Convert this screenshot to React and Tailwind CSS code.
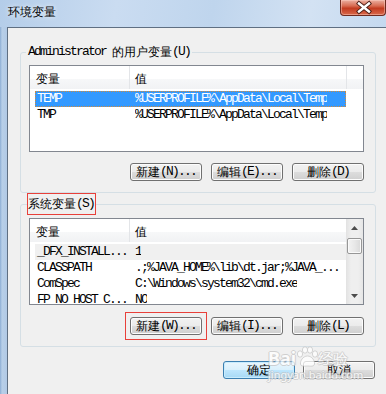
import React from "react";

const CJK = /[\u2E80-\u9FFF\u3000-\u303F\uFF00-\uFFEF]/;

const monoCls = "align-top font-mono text-[13px] tracking-[-1.8px]";
const cjkCls = "align-top font-sans text-[12px] tracking-normal";

function Txt({ s }) {
  const runs = [];
  for (const ch of s) {
    const c = CJK.test(ch);
    const last = runs[runs.length - 1];
    if (last && last.c === c) last.t += ch;
    else runs.push({ c, t: ch });
  }
  return runs.map((r, i) => (
    <span key={i} className={r.c ? cjkCls : monoCls}>
      {r.t}
    </span>
  ));
}

function Btn({ label, primary }) {
  return (
    <div
      className={
        primary
          ? "flex h-[18px] w-[72px] items-center justify-center rounded-[3px] border border-[#3c7fb1] bg-[linear-gradient(#eaf6fd,#d9f0fc_50%,#bee6fd_50%,#a7d9f5)] leading-[14px] shadow-[inset_0_0_0_1px_#c9ecfd]"
          : "flex h-[18px] w-[72px] items-center justify-center rounded-[3px] border border-[#707070] bg-[linear-gradient(#f2f2f2,#ebebeb_50%,#dddddd_50%,#cfcfcf)] leading-[14px] shadow-[inset_0_0_0_1px_#fcfcfc]"
      }
    >
      <div className="h-[14px] whitespace-nowrap leading-[14px]">
        <Txt s={label} />
      </div>
    </div>
  );
}

function Arrow({ down }) {
  return (
    <svg width="7" height="4" viewBox="0 0 7 4">
      {down ? (
        <path d="M0 0 H7 L3.5 4 Z" fill="#4d4d4d" />
      ) : (
        <path d="M0 4 H7 L3.5 0 Z" fill="#4d4d4d" />
      )}
    </svg>
  );
}

const userVars = [
  ["TEMP", "%USERPROFILE%\\AppData\\Local\\Temp"],
  ["TMP", "%USERPROFILE%\\AppData\\Local\\Temp"],
];

const sysVars = [
  ["_DFX_INSTALL...", "1"],
  ["CLASSPATH", ".;%JAVA_HOME%\\lib\\dt.jar;%JAVA_..."],
  ["ComSpec", "C:\\Windows\\system32\\cmd.exe"],
  ["FP_NO_HOST_C...", "NO"],
];

function Row({ name, value, state }) {
  let cls = "flex h-[16px] w-[311px] shrink-0 items-center border border-transparent leading-[14px]";
  if (state === "sel") cls = "flex h-[16px] w-[311px] shrink-0 items-center border border-dotted border-[#d08a3c] bg-[#3399ff] leading-[14px] text-white";
  if (state === "gray") cls = "flex h-[16px] w-[311px] shrink-0 items-center border border-transparent bg-[#f0f0f0] leading-[14px]";
  return (
    <div className={cls}>
      <div className="h-[14px] w-[99px] shrink-0 overflow-hidden whitespace-nowrap pl-[1px]">
        <Txt s={name} />
      </div>
      <div className="h-[14px] overflow-hidden whitespace-nowrap">
        <Txt s={value} />
      </div>
    </div>
  );
}

const headerBg = "bg-[linear-gradient(#ffffff,#ffffff_55%,#f7f8f9_55%,#f1f2f4)]";

export default function App() {
  return (
    <div className="relative flex h-[394px] w-[386px] flex-col overflow-hidden bg-[#f0f0f0] text-black">
      {/* title bar */}
      <div className="flex h-[27px] shrink-0 items-start bg-[linear-gradient(100deg,#b4cde9_0%,#cadcf1_30%,#bfd5ed_55%,#d3e2f3_80%,#c5d9ef_100%)]">
        <div className="pl-[8px] pt-[5px] font-sans text-[12px] leading-[14px] [text-shadow:0_0_5px_#ffffff]">
          环境变量
        </div>
        <div className="ml-auto h-[16px] w-[46px] rounded-b-[4px] border border-t-0 border-[#6e2a1f] bg-[linear-gradient(#ebb0a1,#d76a50_40%,#c23b20_55%,#d9694b)] shadow-[inset_0_0_0_1px_rgba(255,210,200,0.45)]">
          <svg width="44" height="15" viewBox="0 0 44 15">
            <path d="M18 3.5 L28 11.5 M28 3.5 L18 11.5" stroke="#4a1d15" strokeWidth="4.2" strokeLinecap="square" />
            <path d="M18 3.5 L28 11.5 M28 3.5 L18 11.5" stroke="#ffffff" strokeWidth="2.4" strokeLinecap="square" />
          </svg>
        </div>
      </div>

      <div className="flex flex-1">
        <div className="w-[7px] shrink-0 bg-[linear-gradient(90deg,#8cadd4,#b8cfe8_30%,#b1c9e5)]" />
        <div className="flex flex-1 flex-col border-l border-t border-[#5f6f82] pl-[12px] pt-[17px]">
          {/* user variables */}
          <fieldset className="w-[356px] rounded-[3px] border border-[#d5dfe5]">
            <legend className="ml-[5px] h-[14px] whitespace-nowrap px-[2px] leading-[14px]">
              <Txt s="Administrator 的用户变量(U)" />
            </legend>
            <div className="pb-[11px] pl-[8px] pr-[11px] pt-[6px]">
              <div className="flex h-[87px] w-[335px] flex-col overflow-hidden border border-[#828790] bg-white">
                <div className={"flex h-[23px] shrink-0 leading-[14px] " + headerBg}>
                  <div className="w-[100px] border-r border-[#e3e5e8] pl-[6px] pt-[6px]">
                    <Txt s="变量" />
                  </div>
                  <div className="w-[217px] border-r border-[#e3e5e8] pl-[5px] pt-[6px]">
                    <Txt s="值" />
                  </div>
                  <div className="flex-1" />
                </div>
                <div className="ml-[5px] mt-[2px] flex flex-col">
                  {userVars.map(([n, v], i) => (
                    <Row key={n} name={n} value={v} state={i === 0 ? "sel" : ""} />
                  ))}
                </div>
              </div>
              <div className="mt-[11px] flex justify-end gap-[9px]">
                <Btn label="新建(N)..." />
                <Btn label="编辑(E)..." />
                <Btn label="删除(D)" />
              </div>
            </div>
          </fieldset>

          {/* system variables */}
          <fieldset className="w-[356px] rounded-[3px] border border-[#d5dfe5]">
            <legend className="ml-[6px] h-[22px] whitespace-nowrap border border-[#e8403a] py-[3px] pr-[1px] leading-[14px]">
              <Txt s="系统变量(S)" />
            </legend>
            <div className="pb-[11px] pl-[8px] pr-[11px] pt-[3px]">
              <div className="flex h-[87px] w-[335px] overflow-hidden border border-[#828790] bg-white">
                <div className="flex flex-1 flex-col">
                  <div className={"flex h-[23px] shrink-0 leading-[14px] " + headerBg}>
                    <div className="w-[100px] border-r border-[#e3e5e8] pl-[6px] pt-[6px]">
                      <Txt s="变量" />
                    </div>
                    <div className="flex-1 pl-[5px] pt-[6px]">
                      <Txt s="值" />
                    </div>
                  </div>
                  <div className="ml-[5px] mt-[2px] flex flex-col">
                    {sysVars.map(([n, v], i) => (
                      <Row key={n} name={n} value={v} state={i === 0 ? "gray" : ""} />
                    ))}
                  </div>
                </div>
                <div className="flex w-[17px] shrink-0 flex-col items-center bg-[linear-gradient(90deg,#e2e2e2,#efefef_30%,#efefef_70%,#e6e6e6)]">
                  <div className="flex h-[17px] items-center justify-center">
                    <Arrow />
                  </div>
                  <div className="mt-[2px] h-[16px] w-[15px] rounded-[2px] border border-[#979797] bg-[linear-gradient(90deg,#f3f3f3,#e8e8e8_50%,#d9d9d9)] shadow-[inset_0_0_0_1px_#fafafa]" />
                  <div className="flex-1" />
                  <div className="flex h-[17px] items-center justify-center">
                    <Arrow down />
                  </div>
                </div>
              </div>
              <div className="mt-[12px] flex justify-end gap-[9px]">
                <div className="-m-[5px] border border-[#e8403a] p-[4px]">
                  <Btn label="新建(W)..." />
                </div>
                <Btn label="编辑(I)..." />
                <Btn label="删除(L)" />
              </div>
            </div>
          </fieldset>

          <div className="mt-[14px] flex justify-end gap-[8px] pr-[11px]">
            <Btn label="确定" primary />
            <Btn label="取消" />
          </div>
        </div>
      </div>

      {/* baidu watermark */}
      <div className="pointer-events-none absolute left-[268px] top-[346px] flex w-[92px] flex-col items-start text-white opacity-75 [text-shadow:1px_0_0_#c4c4c4,-1px_0_0_#c4c4c4,0_1px_0_#c4c4c4,0_-1px_0_#c4c4c4]">
        <div className="flex items-end font-sans text-[18px] font-bold leading-[20px]">
          <span>Bai</span>
          <svg width="26" height="22" viewBox="0 0 26 22" className="-mx-[2px] shrink-0">
            <g fill="#ffffff" stroke="#bcbcbc" strokeWidth="0.8">
              <ellipse cx="6" cy="8" rx="2.6" ry="3.2" />
              <ellipse cx="11" cy="4" rx="2.6" ry="3.2" />
              <ellipse cx="16" cy="4" rx="2.6" ry="3.2" />
              <ellipse cx="21" cy="8" rx="2.6" ry="3.2" />
              <path d="M13.5 10 C9 10 6 15 6.5 18 C7 21 11 20 13.5 20 C16 20 20 21 20.5 18 C21 15 18 10 13.5 10 Z" />
            </g>
          </svg>
          <span className="text-[15px] font-normal">经验</span>
        </div>
        <div className="font-sans text-[11px] leading-[13px]">jingyan.baidu.com</div>
      </div>
    </div>
  );
}
